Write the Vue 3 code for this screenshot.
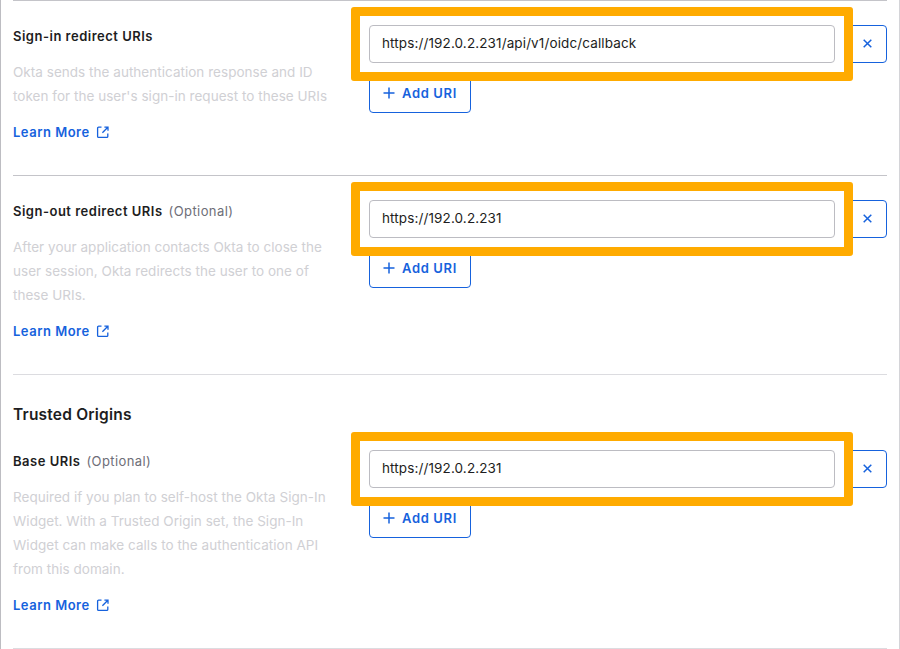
<template>
  <main class="page">
    <section v-for="s in sections" :key="s.label" class="section">
      <h2 v-if="s.heading" class="heading">{{ s.heading }}</h2>
      <div class="row">
        <div class="info">
          <div class="label">
            <strong>{{ s.label }}</strong>
            <span v-if="s.optional" class="optional">(Optional)</span>
          </div>
          <p class="desc">{{ s.desc }}</p>
          <a class="learn" href="#">
            Learn More
            <svg class="ext" width="14" height="14" viewBox="0 0 14 14" fill="none" stroke="currentColor" stroke-width="1.3">
              <path d="M5.5 2.2H2.6a1 1 0 0 0-1 1v8.2a1 1 0 0 0 1 1h8.2a1 1 0 0 0 1-1V8.6" />
              <path d="M6.4 7.7 11.6 2.5M8.4 2.1h3.6v3.6" />
            </svg>
          </a>
        </div>
        <div class="field">
          <div class="input-row">
            <div class="input">{{ s.value }}</div>
            <button class="remove" aria-label="Remove">
              <svg width="9" height="9" viewBox="0 0 9 9" fill="none" stroke="currentColor" stroke-width="1.5">
                <path d="M.7.7l7.6 7.6M8.3.7.7 8.3" />
              </svg>
            </button>
            <div class="highlight"></div>
          </div>
          <button class="add">
            <svg width="12" height="12" viewBox="0 0 12 12" fill="none" stroke="currentColor" stroke-width="1.5">
              <path d="M6 0.5v11M0.5 6h11" />
            </svg>
            <span>Add URI</span>
          </button>
        </div>
      </div>
    </section>
    <div class="end-rule"></div>
  </main>
</template>

<script setup>
const sections = [
  {
    label: 'Sign-in redirect URIs',
    desc: "Okta sends the authentication response and ID token for the user's sign-in request to these URIs",
    value: 'https://192.0.2.231/api/v1/oidc/callback',
  },
  {
    label: 'Sign-out redirect URIs',
    optional: true,
    desc: 'After your application contacts Okta to close the user session, Okta redirects the user to one of these URIs.',
    value: 'https://192.0.2.231',
  },
  {
    heading: 'Trusted Origins',
    label: 'Base URIs',
    optional: true,
    desc: 'Required if you plan to self-host the Okta Sign-In Widget. With a Trusted Origin set, the Sign-In Widget can make calls to the authentication API from this domain.',
    value: 'https://192.0.2.231',
  },
]
</script>

<style>
body {
  margin: 0;
  background: #fff;
}
</style>

<style scoped>
.page {
  box-sizing: border-box;
  height: 649px;
  overflow: hidden;
  padding: 0 12px;
  border-left: 1px solid #bdbdc2;
  border-right: 1px solid #d4d4d8;
  font-family: Inter, "Liberation Sans", sans-serif;
  font-size: 13.5px;
  color: #1d1d21;
}
.section {
  box-sizing: border-box;
  border-top: 1px solid #c4c4c9;
  padding-top: 24px;
}
.section:nth-child(1) {
  height: 175px;
}
.section:nth-child(2) {
  height: 199px;
}
.section:nth-child(3) {
  height: 274px;
  border-top-color: #dcdce0;
}
.heading {
  margin: 7px 0 26px;
  font-size: 15.5px;
  line-height: 18px;
  font-weight: 600;
  letter-spacing: 0.2px;
}
.row {
  display: flex;
}
.info {
  width: 356px;
  flex: none;
}
.label {
  line-height: 22px;
  display: flex;
  gap: 6px;
}
.label strong {
  font-weight: 600;
  font-size: 13px;
  letter-spacing: 0.5px;
}
.optional {
  color: #6e6e78;
  font-size: 13px;
  letter-spacing: 0.4px;
}
.desc {
  width: 320px;
  margin: 13px 0 0;
  line-height: 24px;
  color: #d0d0d4;
  letter-spacing: 0.03px;
}
.learn {
  display: inline-flex;
  align-items: center;
  gap: 6px;
  margin-top: 12px;
  line-height: 24px;
  color: #1662dd;
  font-size: 13px;
  font-weight: 600;
  letter-spacing: 0.5px;
  text-decoration: none;
}
.field {
  flex: 1;
}
.input-row {
  position: relative;
  display: flex;
  gap: 14px;
}
.input {
  box-sizing: border-box;
  width: 466px;
  height: 38px;
  line-height: 35px;
  padding: 0 12px;
  border: 1px solid #bcbcc2;
  border-radius: 4px;
  color: #1d1d21;
  font-size: 13.5px;
  letter-spacing: 0.12px;
}
.remove {
  width: 38px;
  height: 38px;
  flex: none;
  padding: 0 2px 1px 0;
  display: flex;
  align-items: center;
  justify-content: center;
  background: #fff;
  border: 1px solid #1662dd;
  border-radius: 4px;
  color: #1662dd;
}
.highlight {
  position: absolute;
  left: -18px;
  top: -18px;
  width: 502px;
  height: 74px;
  box-sizing: border-box;
  border: 9px solid #ffab00;
  border-radius: 3px;
  pointer-events: none;
}
.add {
  display: flex;
  align-items: center;
  gap: 7px;
  box-sizing: border-box;
  width: 102px;
  height: 38px;
  margin-top: 12px;
  padding: 0 0 2px 13px;
  background: #fff;
  border: 1px solid #1662dd;
  border-radius: 4px;
  color: #1662dd;
  font: 600 13px Inter, "Liberation Sans", sans-serif;
  letter-spacing: 0.65px;
}
.end-rule {
  border-top: 1px solid #dcdce0;
}
</style>
